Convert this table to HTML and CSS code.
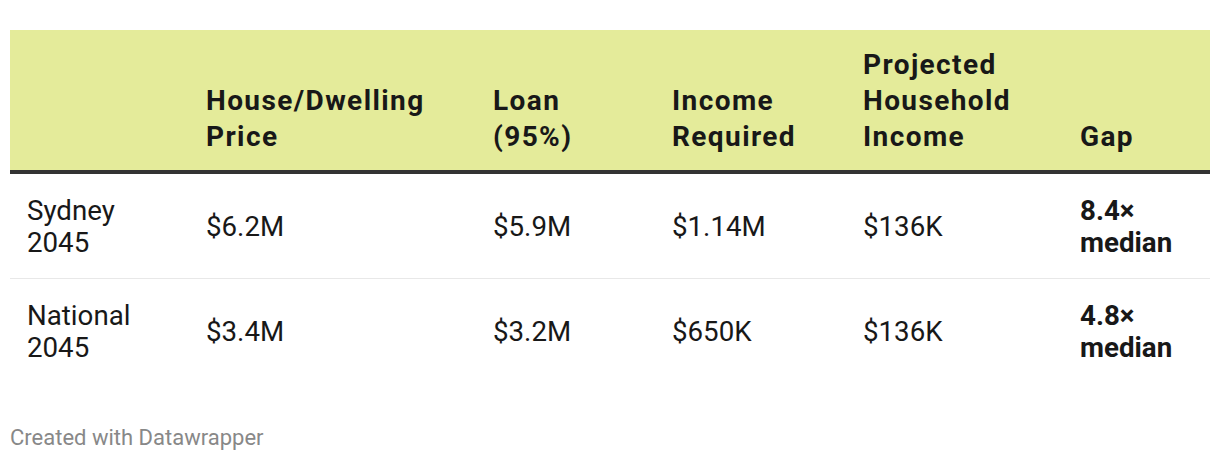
FILE: index.html
```html
<!DOCTYPE html>
<html>
<head>
<meta charset="utf-8">
<link rel="stylesheet" href="styles.css">
</head>
<body>
<div class="chart">
  <table class="dw-table">
    <colgroup>
      <col class="c1"><col class="c2"><col class="c3"><col class="c4"><col class="c5"><col class="c6">
    </colgroup>
    <thead>
      <tr>
        <th></th>
        <th>House/Dwelling<br>Price</th>
        <th>Loan<br>(95%)</th>
        <th>Income<br>Required</th>
        <th>Projected<br>Household<br>Income</th>
        <th>Gap</th>
      </tr>
    </thead>
    <tbody>
      <tr>
        <td>Sydney<br>2045</td>
        <td>$6.2M</td>
        <td>$5.9M</td>
        <td>$1.14M</td>
        <td>$136K</td>
        <td class="strong">8.4×<br>median</td>
      </tr>
      <tr>
        <td>National<br>2045</td>
        <td>$3.4M</td>
        <td>$3.2M</td>
        <td>$650K</td>
        <td>$136K</td>
        <td class="strong">4.8×<br>median</td>
      </tr>
    </tbody>
  </table>
  <div class="footer">Created with Datawrapper</div>
</div>
</body>
</html>
```

FILE: styles.css
```css
html, body {
  margin: 0;
  padding: 0;
  background: #ffffff;
}
body {
  font-family: Roboto, "Liberation Sans", sans-serif;
  color: #181818;
}
.chart {
  padding: 30px 10px 0 10px;
}
.dw-table {
  width: 1200px;
  border-collapse: collapse;
  table-layout: fixed;
}
.c1 { width: 179px; }
.c2 { width: 287px; }
.c3 { width: 179px; }
.c4 { width: 191px; }
.c5 { width: 217px; }
.c6 { width: 147px; }
.dw-table th {
  background: #e4eb9a;
  font-weight: 700;
  font-size: 28px;
  letter-spacing: 1.4px;
  line-height: 36px;
  text-align: left;
  vertical-align: bottom;
  padding: 17px 0 15px 17px;
  border-bottom: 4px solid #333333;
}
.dw-table td {
  font-size: 27.7px;
  line-height: 32px;
  vertical-align: middle;
  padding: 21px 0 19px 17px;
  height: 64px;
}
.dw-table tbody tr:first-child td {
  border-bottom: 1px solid #e8e8e8;
}
.dw-table td.strong {
  font-weight: 700;
}
.footer {
  margin-top: 43px;
  font-size: 22px;
  color: #888888;
  line-height: 24px;
}
```
